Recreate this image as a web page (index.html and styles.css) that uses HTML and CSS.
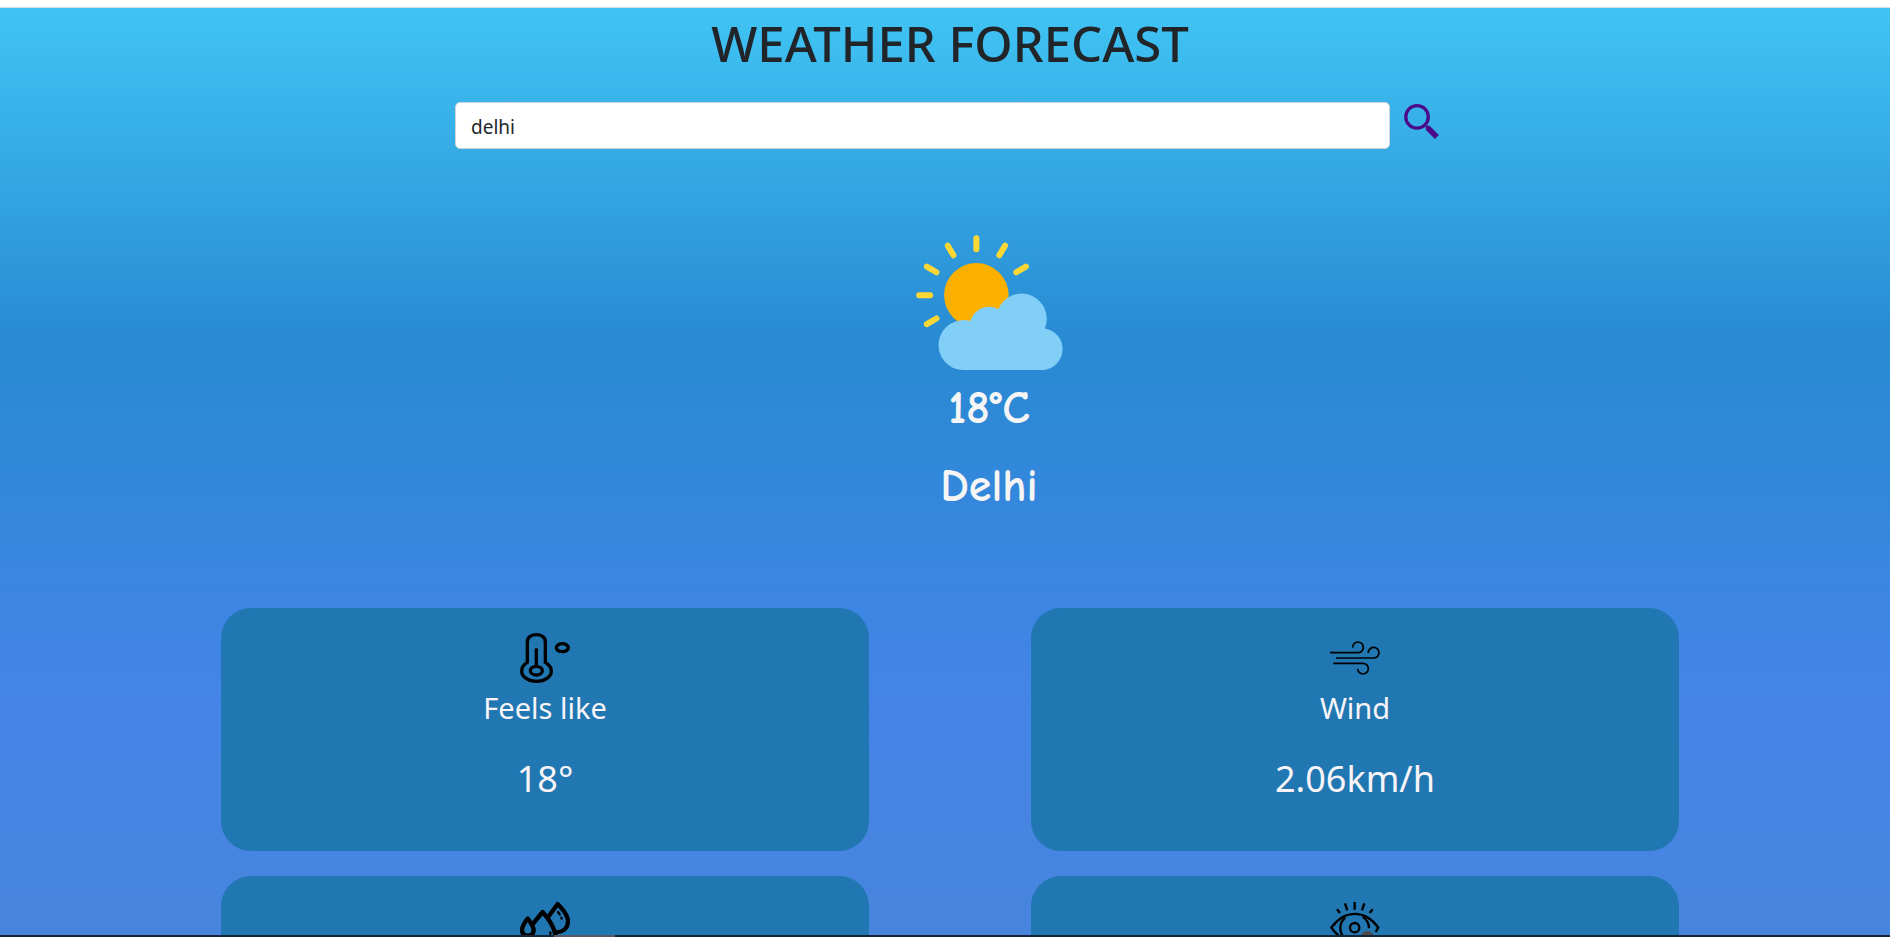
FILE: index.html
```html
<!DOCTYPE html>
<html lang="en">
<head>
<meta charset="utf-8">
<title>Weather Forecast</title>
<link rel="stylesheet" href="styles.css">
</head>
<body>
<main class="app">
  <h1 class="title">WEATHER FORECAST</h1>
  <form class="search">
    <input class="search-input" type="text" value="delhi" aria-label="City">
    <button class="search-button" type="button" aria-label="Search">
      <svg viewBox="100 42 105 106" width="35" height="35">
        <circle cx="139" cy="81" r="34" fill="none" stroke="#4b0a8a" stroke-width="10"/>
        <path d="M165 107 L177 108 L205 136 L193 148 L166 121 Z" fill="#4b0a8a"/>
      </svg>
    </button>
  </form>
  <section class="current">
    <svg viewBox="45 44 441 406" width="147" height="135" aria-hidden="true">
      <circle cx="226" cy="225" r="97" fill="#fbb000"/>
      <path d="M226 54V87M140 76L157 105M312 76L295 105M77 139L106 156M375 139L346 156M54 225H87M77 312L106 295" fill="none" stroke="#fdd835" stroke-width="18" stroke-linecap="round"/>
      <path d="M186 450A75 75 0 1 1 208 303A58 58 0 0 1 292 267A75 75 0 0 1 432 325A63 63 0 0 1 428 450Z" fill="#81cef7"/>
    </svg>
    <p class="current-text">18°C</p>
    <p class="current-text">Delhi</p>
  </section>
  <section class="cards">
    <article class="card">
      <svg viewBox="60 39 150 150" width="50" height="50" fill="none" stroke="#000" stroke-width="10" aria-hidden="true">
        <path d="M82 127V65C82 37 136 37 136 65V127C144 132 154 140 154 153C154 171 134 184 110 184S65 171 65 153C65 140 74 132 82 127Z"/>
        <ellipse cx="109" cy="152" rx="18" ry="13"/>
        <path d="M109 139V85"/>
        <ellipse cx="187" cy="83" rx="18" ry="12"/>
      </svg>
      <h2 class="card-label">Feels like</h2>
      <p class="card-value">18°</p>
    </article>
    <article class="card">
      <svg viewBox="60 9 150 150" width="50" height="50" fill="none" stroke="#000" stroke-width="5" aria-hidden="true">
        <path d="M60 68H144A16 16 0 1 0 128 53M78 84H191A16 16 0 1 0 175 69M70 100H159A16 16 0 1 1 143 116"/>
      </svg>
      <h2 class="card-label">Wind</h2>
      <p class="card-value">2.06km/h</p>
    </article>
    <article class="card">
      <svg viewBox="90 93 150 150" width="50" height="50" fill="none" stroke="#000" stroke-width="13" stroke-linejoin="round" stroke-linecap="round" aria-hidden="true">
        <path d="M113 146C105 156 96 170 96 181C96 202 131 202 131 181C131 170 121 156 113 146Z"/>
        <path d="M130 160L158 126C174 144 195 174 197 202C197 245 119 245 119 202"/>
        <path d="M176 139L203 102C213 112 236 136 234 156C233 175 218 186 200 187"/>
        <path d="M204 126L209 133M214 143L215 146M181 187V192" stroke-width="7"/>
      </svg>
    </article>
    <article class="card">
      <svg viewBox="91 93 150 150" width="50" height="50" fill="none" stroke="#000" stroke-width="7" aria-hidden="true">
        <path d="M112 118L121 129M136 100L143 121M165 96V119M194 100L187 121M219 118L210 129"/>
        <path d="M228 186L236 173C196 118 135 118 95 173C135 228 190 228 216 203"/>
        <path d="M137 143C116 160 118 190 137 207M189 140C203 149 208 159 208 175"/>
        <circle cx="165" cy="173" r="14"/>
        <circle cx="203" cy="203" r="20" fill="#4a4a4a" stroke="none"/>
      </svg>
    </article>
  </section>
</main>
<div class="bottom-bar"><div class="bottom-thumb"></div></div>
</body>
</html>
```
FILE: styles.css
```css
* {
  box-sizing: border-box;
}

body {
  margin: 0;
  height: 100vh;
  display: flex;
  flex-direction: column;
  overflow: hidden;
  padding-top: 7px;
  background: #fff;
  color: #212529;
  font-family: "Segoe UI", "Noto Sans", "Open Sans", sans-serif;
}

h1, h2, p {
  margin: 0;
  font-weight: 400;
}

svg {
  display: block;
}

.app {
  flex: 1;
  min-height: 0;
  overflow: hidden;
  padding-left: 10px;
  border-top: 1px solid #cfdde4;
  background: linear-gradient(#40c4f4 0, #288ad2 335px, #4484e8 690px, #4785dd 930px);
}

.title {
  padding-top: 5px;
  font-size: 49px;
  font-weight: 500;
  line-height: 60px;
  text-align: center;
}

.search {
  display: flex;
  align-items: flex-start;
  gap: 14px;
  padding: 29px 451px 0 445px;
}

.search-input {
  flex: 1;
  min-width: 0;
  height: 47px;
  padding: 2px 15px 0;
  border: 1px solid #ced4da;
  border-radius: 5px;
  background: #fff;
  color: #212529;
  font: inherit;
  font-size: 19px;
}

.search-button {
  padding: 2px 0 0;
  border: 0;
  background: none;
}

.current {
  display: flex;
  flex-direction: column;
  align-items: center;
  padding: 86px 0 82px 78px;
}

.current-text {
  height: 78px;
  padding-top: 9px;
  color: #f5f5f5;
  font-family: "Comic Sans MS", "Comic Neue", Lato, sans-serif;
  font-size: 46px;
  font-weight: 700;
  line-height: 60px;
}

.cards {
  display: grid;
  grid-template-columns: 1fr 1fr;
  gap: 25px 162px;
  padding: 0 211px;
}

.card {
  display: flex;
  flex-direction: column;
  align-items: center;
  height: 243px;
  padding-top: 25px;
  border-radius: 30px;
  background: #2177b1;
  color: #f8f4f8;
}

.card-label {
  font-size: 29px;
  line-height: 50px;
}

.card-value {
  padding-top: 16px;
  font-size: 36px;
  line-height: 60px;
}

.bottom-bar {
  height: 2px;
  background: #15243a;
}

.bottom-thumb {
  width: 61px;
  height: 2px;
  margin-left: 554px;
  background: #545b66;
}
```
